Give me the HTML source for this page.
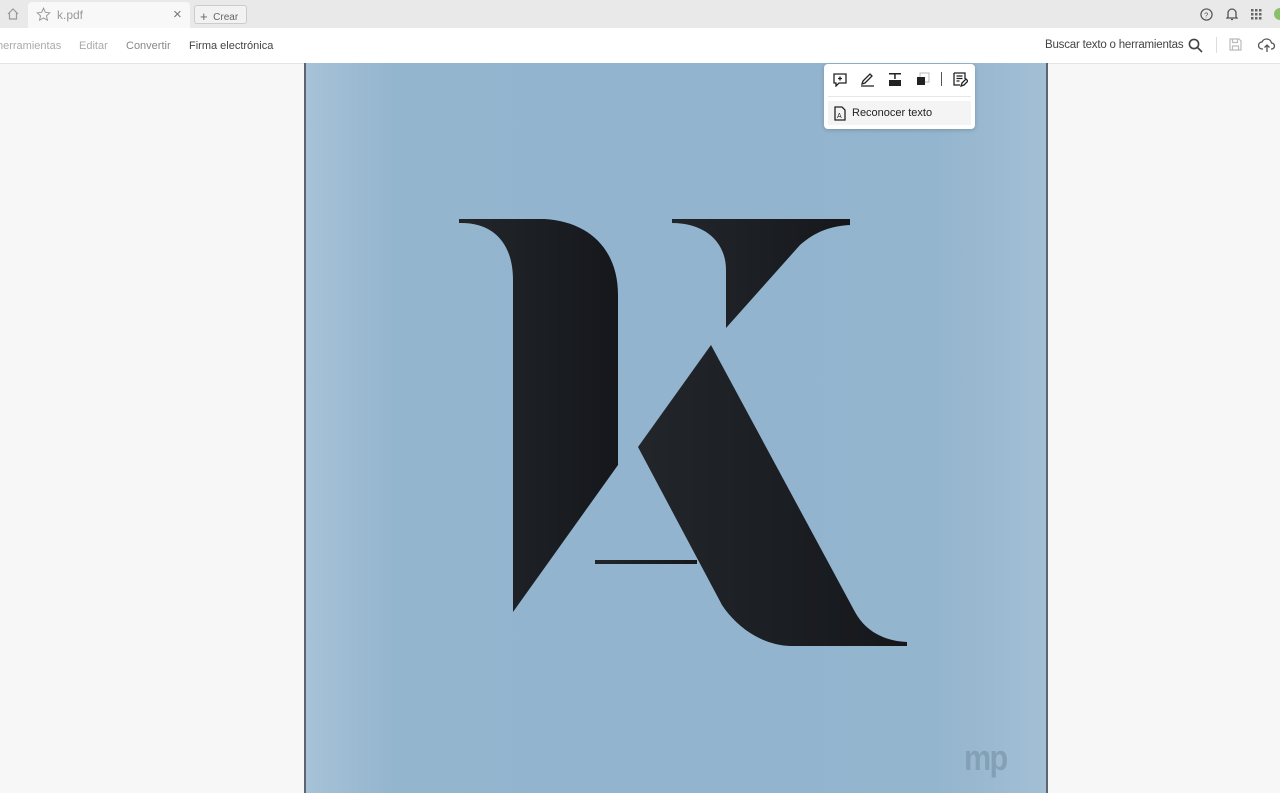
<!DOCTYPE html>
<html><head><meta charset="utf-8"><style>
body{margin:0;width:1280px;height:787px;overflow:hidden;background:#f7f7f7;font-family:"Liberation Sans",sans-serif;position:relative}
.top{position:absolute;left:0;top:0;width:1280px;height:28px;background:#e9e9e9}
.tab{position:absolute;left:28px;top:2px;width:162px;height:26px;background:#f8f8f8;border-radius:4px 4px 0 0}
.bar{position:absolute;left:0;top:28px;width:1280px;height:35px;background:#fff;border-bottom:1px solid #e4e4e4}
.t{position:absolute;font-size:11px;white-space:nowrap}
.page{position:absolute;left:304px;top:63px;width:740px;height:730px;border-left:2px solid #5d6670;border-right:2px solid #5d6670;background:linear-gradient(90deg,#a6c2d7 0%,#94b5ce 12%,#92b4ce 50%,#94b5ce 85%,#a2bfd5 100%)}
.pop{position:absolute;left:824px;top:64px;width:151px;height:65px;background:#fff;border-radius:4px;box-shadow:0 1px 4px rgba(0,0,0,.2)}
</style></head><body>
<div class="top"></div>
<div class="tab"></div>
<svg style="position:absolute;left:6px;top:7px" width="14" height="14" viewBox="0 0 14 14" fill="none" stroke="#999" stroke-width="1.2"><path d="M2 7L7 2L12 7M3.5 6V12H10.5V6"/></svg>
<svg style="position:absolute;left:36px;top:7px" width="15" height="15" viewBox="0 0 24 24" fill="none" stroke="#999" stroke-width="1.6"><path d="M12 2l3 6.5 7 .8-5.2 4.8 1.5 7L12 17.5 5.7 21l1.5-7L2 9.3l7-.8z"/></svg>
<div class="t" style="left:57px;top:8px;color:#999;font-size:12px">k.pdf</div>
<div class="t" style="left:173px;top:6px;color:#777;font-size:15px">×</div>
<div style="position:absolute;left:194px;top:5px;width:51px;height:17px;border:1px solid #ccc;border-radius:3px;background:#f2f2f2"></div>
<div class="t" style="left:200px;top:8px;color:#666;font-size:10px"><span style="font-size:13px;position:relative;top:1px">+</span>&nbsp;&nbsp;Crear</div>
<svg style="position:absolute;left:1200px;top:8px" width="13" height="13" viewBox="0 0 14 14" fill="none" stroke="#555" stroke-width="1.3"><circle cx="7" cy="7" r="6"/><text x="4.5" y="10" font-size="8" fill="#555" stroke="none" font-family="Liberation Sans">?</text></svg>
<svg style="position:absolute;left:1226px;top:7px" width="12" height="14" viewBox="0 0 12 14" fill="none" stroke="#555" stroke-width="1.3"><path d="M2 10V6a4 4 0 0 1 8 0v4l1 1H1zM5 12.5h2"/></svg>
<svg style="position:absolute;left:1251px;top:9px" width="11" height="11" fill="#666"><g><rect x="0" y="0" width="2.5" height="2.5"/><rect x="4" y="0" width="2.5" height="2.5"/><rect x="8" y="0" width="2.5" height="2.5"/><rect x="0" y="4" width="2.5" height="2.5"/><rect x="4" y="4" width="2.5" height="2.5"/><rect x="8" y="4" width="2.5" height="2.5"/><rect x="0" y="8" width="2.5" height="2.5"/><rect x="4" y="8" width="2.5" height="2.5"/><rect x="8" y="8" width="2.5" height="2.5"/></g></svg>
<div style="position:absolute;left:1274px;top:8px;width:12px;height:12px;border-radius:50%;background:#8bbf6a"></div>
<div class="bar"></div>
<div class="t" style="left:-3px;top:40px;color:#aaa">herramientas</div>
<div class="t" style="left:79px;top:40px;color:#aaa">Editar</div>
<div class="t" style="left:126px;top:40px;color:#888">Convertir</div>
<div class="t" style="left:189px;top:40px;color:#444">Firma electrónica</div>
<div class="t" style="left:1045px;top:39px;color:#444;font-size:11.5px;letter-spacing:-0.2px">Buscar texto o herramientas</div>
<svg style="position:absolute;left:1188px;top:38px" width="15" height="15" fill="none" stroke="#444" stroke-width="1.6"><circle cx="6" cy="6" r="4.6"/><path d="M9.5 9.5L14 14"/></svg>
<div style="position:absolute;left:1216px;top:37px;width:1px;height:16px;background:#ddd"></div>
<svg style="position:absolute;left:1229px;top:38px" width="13" height="13" fill="none" stroke="#bbb" stroke-width="1.2"><path d="M1 1h9l2 2v9H1z M3.5 1v3.5h5V1 M3.5 12V8h6v4"/></svg>
<svg style="position:absolute;left:1258px;top:37px" width="18" height="16" fill="none" stroke="#555" stroke-width="1.3"><path d="M5 12H4a3.5 3.5 0 0 1 0-7 5 5 0 0 1 9.5 1 3 3 0 0 1 0 6H13M9 15V8M6.5 10.5L9 8l2.5 2.5"/></svg>
<div class="page">
<svg width="740" height="730" viewBox="306 63 740 730" style="position:absolute;left:0;top:0">
<defs><linearGradient id="g" x1="0" x2="1"><stop offset="0" stop-color="#22262b"/><stop offset="1" stop-color="#15171b"/></linearGradient></defs>
<g fill="url(#g)">
<path d="M459 219H545C590 222 618 250 618 295V465L513 612V280C513 245 495 222 459 223Z"/>
<path d="M672 219H850V225C830 226 815 232 800 245L726 328V270C726 242 705 223 672 223Z"/>
<path d="M711 345L855 612C866 632 885 641 907 642V646H790C760 645 735 625 722 605L638 447Z"/>
<path d="M595 560H697V564H595Z"/>
</g>
<text x="964" y="770" font-family="Liberation Sans Narrow, Liberation Sans" font-size="36" font-weight="bold" fill="#84a0b6" letter-spacing="-2" transform="translate(964 770) scale(0.85 1) translate(-964 -770)">mp</text>
</svg>
</div>
<div class="pop">
<svg style="position:absolute;left:9px;top:9px" width="14" height="14" fill="none" stroke="#222" stroke-width="1.3"><path d="M1 1h12v9H6l-3 3v-3H1z M7 3.5v4M5 5.5h4"/></svg>
<svg style="position:absolute;left:36px;top:8px" width="15" height="15" fill="none" stroke="#222" stroke-width="1.3"><path d="M2 12l1-3 7-7 2 2-7 7z M1 14h13"/></svg>
<svg style="position:absolute;left:64px;top:8px" width="14" height="15" fill="#222"><rect x="1" y="1" width="12" height="1.5"/><rect x="6.2" y="1" width="1.5" height="6"/><rect x="1" y="8" width="12" height="6"/></svg>
<svg style="position:absolute;left:92px;top:8px" width="14" height="14"><rect x="4" y="1" width="9" height="9" fill="none" stroke="#bbb"/><rect x="1" y="5" width="8" height="8" fill="#222"/></svg>
<div style="position:absolute;left:117px;top:8px;width:1px;height:14px;background:#555"></div>
<svg style="position:absolute;left:129px;top:8px" width="15" height="15" fill="none" stroke="#222" stroke-width="1.3"><path d="M1 1h11v6 M1 1v12h6 M3.5 4h6M3.5 6.5h6M3.5 9h3 M8 14l1-3 4-4 2 2-4 4z"/></svg>
<div style="position:absolute;left:4px;top:32px;width:143px;height:1px;background:#e6e6e6"></div>
<div style="position:absolute;left:4px;top:37px;width:143px;height:24px;background:#f4f4f4"></div>
<svg style="position:absolute;left:10px;top:42px" width="12" height="15" fill="none" stroke="#222" stroke-width="1.3"><path d="M1 1h7l3 3v10H1z"/><text x="3" y="12" font-size="7" fill="#222" stroke="none" font-family="Liberation Sans">A</text></svg>
<div class="t" style="left:28px;top:43px;color:#222">Reconocer texto</div>
</div>
</body></html>
